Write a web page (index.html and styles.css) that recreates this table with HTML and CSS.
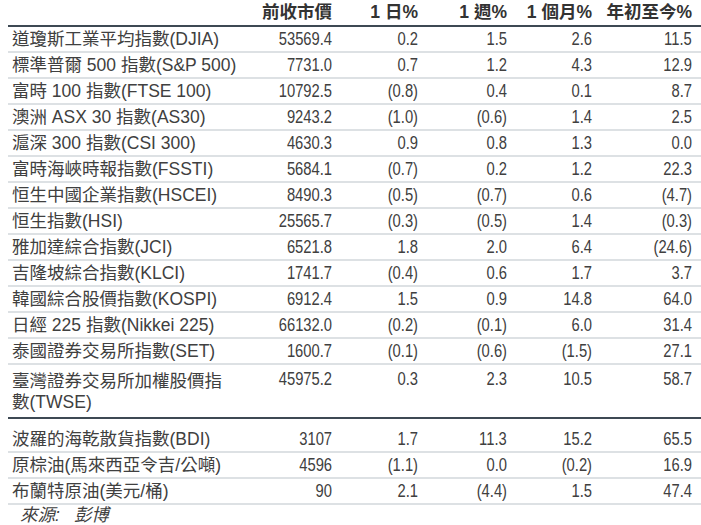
FILE: index.html
```html
<!DOCTYPE html>
<html lang="zh-Hant">
<head>
<meta charset="utf-8">
<link rel="stylesheet" href="styles.css">
</head>
<body>
<div class="wrap">
<table class="mkt">
  <colgroup>
    <col class="c-name"><col class="c-num1"><col class="c-num2"><col class="c-num3"><col class="c-num4"><col class="c-num5">
  </colgroup>
  <thead>
    <tr><th class="name"></th><th>前收市價</th><th>1 日%</th><th>1 週%</th><th>1 個月%</th><th class="last">年初至今%</th></tr>
  </thead>
  <tbody>
    <tr><td class="name">道瓊斯工業平均指數(DJIA)</td><td><span class="n">53569.4</span></td><td><span class="n">0.2</span></td><td><span class="n">1.5</span></td><td><span class="n">2.6</span></td><td class="last"><span class="n">11.5</span></td></tr>
    <tr><td class="name">標準普爾 500 指數(S&amp;P 500)</td><td><span class="n">7731.0</span></td><td><span class="n">0.7</span></td><td><span class="n">1.2</span></td><td><span class="n">4.3</span></td><td class="last"><span class="n">12.9</span></td></tr>
    <tr><td class="name">富時 100 指數(FTSE 100)</td><td><span class="n">10792.5</span></td><td><span class="n">(0.8)</span></td><td><span class="n">0.4</span></td><td><span class="n">0.1</span></td><td class="last"><span class="n">8.7</span></td></tr>
    <tr><td class="name">澳洲 ASX 30 指數(AS30)</td><td><span class="n">9243.2</span></td><td><span class="n">(1.0)</span></td><td><span class="n">(0.6)</span></td><td><span class="n">1.4</span></td><td class="last"><span class="n">2.5</span></td></tr>
    <tr><td class="name">滬深 300 指數(CSI 300)</td><td><span class="n">4630.3</span></td><td><span class="n">0.9</span></td><td><span class="n">0.8</span></td><td><span class="n">1.3</span></td><td class="last"><span class="n">0.0</span></td></tr>
    <tr><td class="name">富時海峽時報指數(FSSTI)</td><td><span class="n">5684.1</span></td><td><span class="n">(0.7)</span></td><td><span class="n">0.2</span></td><td><span class="n">1.2</span></td><td class="last"><span class="n">22.3</span></td></tr>
    <tr><td class="name">恒生中國企業指數(HSCEI)</td><td><span class="n">8490.3</span></td><td><span class="n">(0.5)</span></td><td><span class="n">(0.7)</span></td><td><span class="n">0.6</span></td><td class="last"><span class="n">(4.7)</span></td></tr>
    <tr><td class="name">恒生指數(HSI)</td><td><span class="n">25565.7</span></td><td><span class="n">(0.3)</span></td><td><span class="n">(0.5)</span></td><td><span class="n">1.4</span></td><td class="last"><span class="n">(0.3)</span></td></tr>
    <tr><td class="name">雅加達綜合指數(JCI)</td><td><span class="n">6521.8</span></td><td><span class="n">1.8</span></td><td><span class="n">2.0</span></td><td><span class="n">6.4</span></td><td class="last"><span class="n">(24.6)</span></td></tr>
    <tr><td class="name">吉隆坡綜合指數(KLCI)</td><td><span class="n">1741.7</span></td><td><span class="n">(0.4)</span></td><td><span class="n">0.6</span></td><td><span class="n">1.7</span></td><td class="last"><span class="n">3.7</span></td></tr>
    <tr><td class="name">韓國綜合股價指數(KOSPI)</td><td><span class="n">6912.4</span></td><td><span class="n">1.5</span></td><td><span class="n">0.9</span></td><td><span class="n">14.8</span></td><td class="last"><span class="n">64.0</span></td></tr>
    <tr><td class="name">日經 225 指數(Nikkei 225)</td><td><span class="n">66132.0</span></td><td><span class="n">(0.2)</span></td><td><span class="n">(0.1)</span></td><td><span class="n">6.0</span></td><td class="last"><span class="n">31.4</span></td></tr>
    <tr><td class="name">泰國證券交易所指數(SET)</td><td><span class="n">1600.7</span></td><td><span class="n">(0.1)</span></td><td><span class="n">(0.6)</span></td><td><span class="n">(1.5)</span></td><td class="last"><span class="n">27.1</span></td></tr>
    <tr class="tall"><td class="name">臺灣證券交易所加權股價指數(TWSE)</td><td><span class="n">45975.2</span></td><td><span class="n">0.3</span></td><td><span class="n">2.3</span></td><td><span class="n">10.5</span></td><td class="last"><span class="n">58.7</span></td></tr>
  </tbody>
  <tbody class="second">
    <tr class="first"><td class="name">波羅的海乾散貨指數(BDI)</td><td><span class="n">3107</span></td><td><span class="n">1.7</span></td><td><span class="n">11.3</span></td><td><span class="n">15.2</span></td><td class="last"><span class="n">65.5</span></td></tr>
    <tr><td class="name">原棕油(馬來西亞令吉/公噸)</td><td><span class="n">4596</span></td><td><span class="n">(1.1)</span></td><td><span class="n">0.0</span></td><td><span class="n">(0.2)</span></td><td class="last"><span class="n">16.9</span></td></tr>
    <tr><td class="name">布蘭特原油(美元/桶)</td><td><span class="n">90</span></td><td><span class="n">2.1</span></td><td><span class="n">(4.4)</span></td><td><span class="n">1.5</span></td><td class="last"><span class="n">47.4</span></td></tr>
  </tbody>
</table>
<p class="source">來源:<span class="gap"></span>彭博</p>
</div>
</body>
</html>
```

FILE: styles.css
```css
html, body {
  margin: 0;
  padding: 0;
  background: #ffffff;
  overflow: hidden;
}
body {
  font-family: "Liberation Sans", "Noto Sans CJK TC", sans-serif;
  font-size: 17.5px;
  color: #404040;
}
.wrap {
  padding-left: 8px;
}
.mkt {
  width: 693px;
  border-collapse: collapse;
  table-layout: fixed;
}
.c-name { width: 242px; }
.c-num1 { width: 82px; }
.c-num2 { width: 86px; }
.c-num3 { width: 89px; }
.c-num4 { width: 85px; }
.c-num5 { width: 109px; }
.mkt th {
  font-weight: bold;
  color: #333333;
  text-align: right;
  padding: 0;
  line-height: 25px;
  border-bottom: 2px solid #3d4953;
  white-space: nowrap;
}
.mkt td {
  text-align: right;
  padding: 0;
  line-height: 24px;
  vertical-align: top;
  border-bottom: 2px solid #dde1e4;
  white-space: nowrap;
}
.mkt .name {
  text-align: left;
  padding-left: 4px;
}
.mkt .last {
  padding-right: 9px;
}
.n {
  display: inline-block;
  font-size: 18px;
  transform: scaleX(0.82);
  transform-origin: right center;
}
.mkt tr.tall td {
  border-bottom: 2px solid #3d4953;
  padding-top: 2px;
  padding-bottom: 0;
}
.mkt tr.tall td.name {
  white-space: normal;
  padding-top: 6px;
  padding-bottom: 4px;
  padding-right: 20px;
  line-height: 21px;
}
.second tr.first td {
  padding-top: 8px;
}
.source {
  margin: 0;
  padding-left: 12px;
  font-style: italic;
  line-height: 20px;
  color: #404040;
}
.gap {
  display: inline-block;
  width: 14px;
}
```
